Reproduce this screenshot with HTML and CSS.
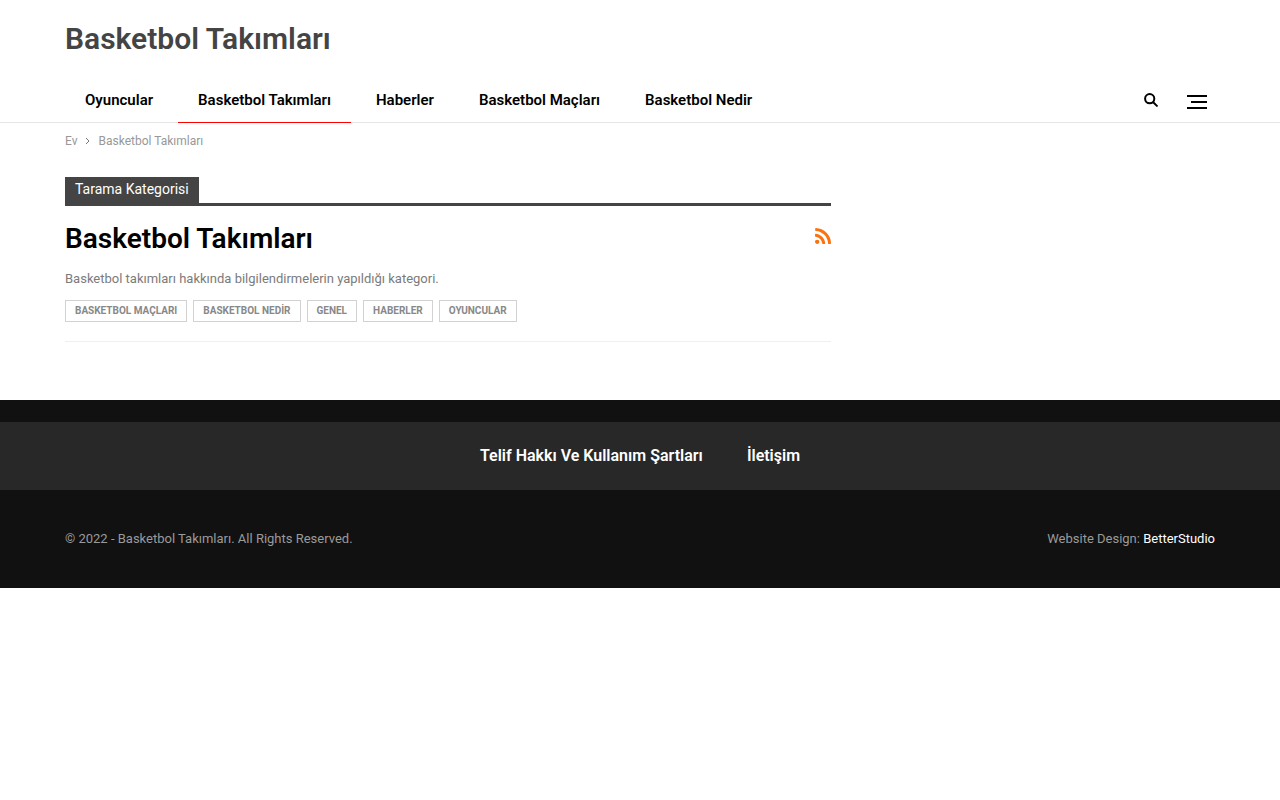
FILE: index.html
```html
<!DOCTYPE html>
<html lang="tr">
<head>
<meta charset="utf-8">
<title>Basketbol Takımları</title>
<link rel="stylesheet" href="styles.css">
</head>
<body>
<header class="header">
  <div class="container">
    <p class="logo"><a href="#">Basketbol Takımları</a></p>
    <div class="menu-bar">
      <nav class="menu">
        <a href="#">Oyuncular</a>
        <a href="#" class="current">Basketbol Takımları</a>
        <a href="#">Haberler</a>
        <a href="#">Basketbol Maçları</a>
        <a href="#">Basketbol Nedir</a>
      </nav>
      <div class="actions">
        <button class="search" aria-label="Ara"><svg width="14" height="14" viewBox="0 0 14 14"><circle cx="5.700" cy="5.700" r="4.600"/><path d="M9.200 9.200l3.700 3.700"/></svg></button>
        <button class="burger" aria-label="Menü"><span></span><span class="short"></span><span></span></button>
      </div>
    </div>
  </div>
</header>
<nav class="breadcrumb container" aria-label="Konum">
  <a href="#">Ev</a>
  <svg width="5" height="8" viewBox="0 0 5 8"><path d="M1 1l3 3-3 3"/></svg>
  <span>Basketbol Takımları</span>
</nav>
<main class="container">
  <section class="category">
    <div class="heading"><span>Tarama Kategorisi</span></div>
    <div class="title-row">
      <h1>Basketbol Takımları</h1>
      <a href="#" class="rss" aria-label="RSS"><svg width="16" height="16" viewBox="0 0 1408 1408"><path d="M384 1216q0 80-56 136t-136 56-136-56-56-136 56-136 136-56 136 56 56 136zm512 123q2 28-17 48-18 21-47 21H697q-25 0-43-16.500t-20-41.500q-22-229-184.500-391.500T58 774q-25-2-41.500-20T0 711V576q0-29 21-47 17-17 43-17h5q160 13 306 80.500T634 774q114 113 181.500 259T896 1339zm512 2q2 27-18 47-18 20-46 20h-143q-26 0-44.500-17.500T1153 1348q-12-215-101-408.500t-231.500-336-336-231.500T76 270q-25-1-42.500-19.500T16 207V64q0-28 20-46Q54 0 80 0h3q262 13 501.500 120T1010 414q187 186 294 425.500t104 501.500z"/></svg></a>
    </div>
    <p class="description">Basketbol takımları hakkında bilgilendirmelerin yapıldığı kategori.</p>
    <div class="tags">
      <a href="#">BASKETBOL MAÇLARI</a>
      <a href="#">BASKETBOL NEDİR</a>
      <a href="#">GENEL</a>
      <a href="#">HABERLER</a>
      <a href="#">OYUNCULAR</a>
    </div>
  </section>
</main>
<footer class="footer">
  <nav class="footer-menu">
    <a href="#">Telif Hakkı Ve Kullanım Şartları</a>
    <a href="#">İletişim</a>
  </nav>
  <div class="copyright container">
    <span>© 2022 - Basketbol Takımları. All Rights Reserved.</span>
    <span>Website Design: <a href="#">BetterStudio</a></span>
  </div>
</footer>
</body>
</html>
```
FILE: styles.css
```css
* { box-sizing: border-box; }
body { margin: 0; background: #fff; font-family: Roboto, sans-serif; font-size: 13px; color: #7b7b7b; }
a { color: inherit; text-decoration: none; }
p, h1 { margin: 0; }
button { padding: 0; border: 0; background: none; cursor: pointer; }
svg { display: block; }
.container { max-width: 1150px; margin: 0 auto; }
.header { border-bottom: 1px solid #e6e6e6; }
.logo { padding: 20px 0 21px; font-size: 30px; font-weight: 600; line-height: 37px; color: #444; }
.menu-bar { display: flex; justify-content: space-between; height: 44px; }
.menu { display: flex; gap: 5px; margin-bottom: -1px; }
.menu a { padding: 0 20px; font-size: 15px; font-weight: 600; line-height: 44px; color: #000; }
.menu .current { border-bottom: 1px solid #f00; }
.actions { display: flex; align-items: center; gap: 29px; padding-right: 8px; }
.search svg { fill: none; stroke: #000; stroke-width: 2; stroke-linecap: round; }
.burger { display: flex; flex-direction: column; align-items: flex-end; gap: 4px; width: 20px; padding-top: 3px; }
.burger span { width: 20px; height: 2px; background: #000; }
.burger .short { width: 16px; }
.breadcrumb { display: flex; align-items: center; gap: 8px; height: 36px; font-size: 12px; color: #989898; }
.breadcrumb svg { fill: none; stroke: #777; }
.category { width: 67%; max-width: 766px; margin-top: 18px; padding-bottom: 19px; border-bottom: 1px solid #efefef; }
.heading { display: flex; border-bottom: 3px solid #444; }
.heading span { padding: 0 10px 2px; background: #444; color: #fff; font-size: 14px; line-height: 24px; }
.title-row { display: flex; justify-content: space-between; align-items: flex-start; margin-top: 15px; }
h1 { font-size: 28px; font-weight: 600; line-height: 36px; color: #000; }
.rss { padding-top: 7px; fill: #f97410; }
.description { margin-top: 11px; line-height: 22px; }
.tags { display: flex; flex-wrap: wrap; gap: 6px; margin-top: 10px; }
.tags a { padding: 0 9px; border: 1px solid #d2d2d2; font-size: 10px; font-weight: 700; line-height: 20px; color: #888; }
.footer { margin-top: 58px; padding-top: 22px; background: #111; }
.footer-menu { display: flex; justify-content: center; gap: 44px; background: #282828; font-size: 16px; font-weight: 600; line-height: 68px; color: #fff; }
.copyright { display: flex; justify-content: space-between; font-weight: 400; line-height: 98px; color: #9a9a9a; }
.copyright a { color: #fff; }
```
